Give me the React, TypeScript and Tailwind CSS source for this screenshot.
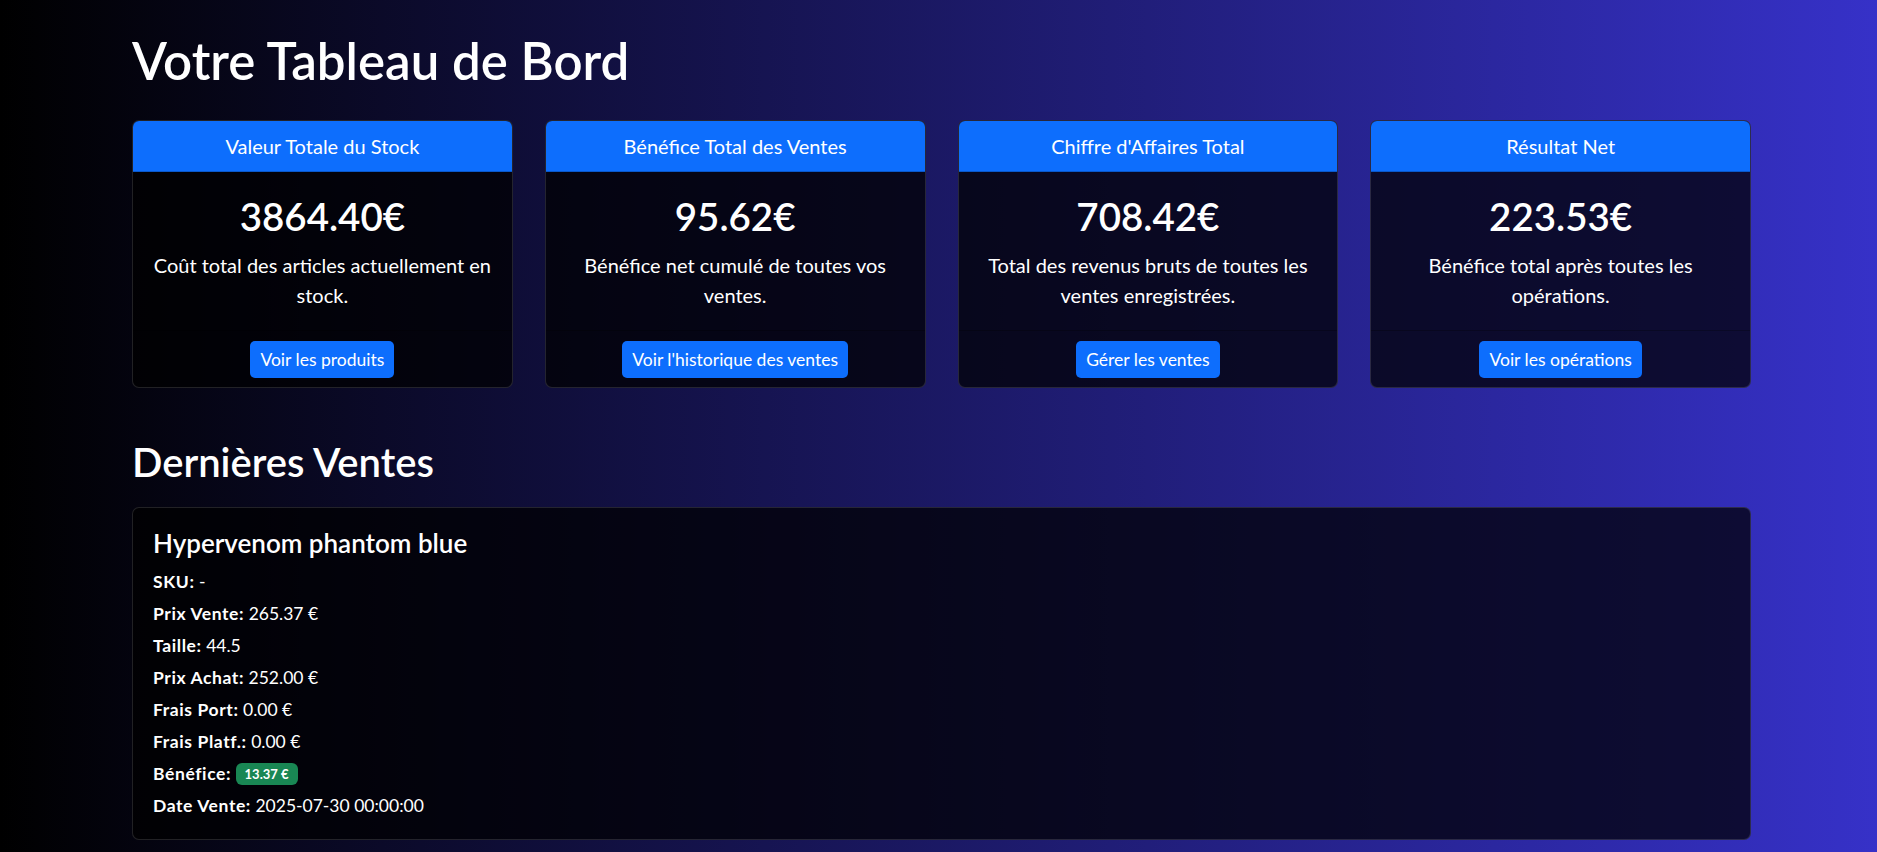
const stats = [
  {
    title: "Valeur Totale du Stock",
    value: "3864.40€",
    text: "Coût total des articles actuellement en stock.",
    action: "Voir les produits",
  },
  {
    title: "Bénéfice Total des Ventes",
    value: "95.62€",
    text: "Bénéfice net cumulé de toutes vos ventes.",
    action: "Voir l'historique des ventes",
  },
  {
    title: "Chiffre d'Affaires Total",
    value: "708.42€",
    text: "Total des revenus bruts de toutes les ventes enregistrées.",
    action: "Gérer les ventes",
  },
  {
    title: "Résultat Net",
    value: "223.53€",
    text: "Bénéfice total après toutes les opérations.",
    action: "Voir les opérations",
  },
];

const details = [
  ["SKU:", "-"],
  ["Prix Vente:", "265.37 €"],
  ["Taille:", "44.5"],
  ["Prix Achat:", "252.00 €"],
  ["Frais Port:", "0.00 €"],
  ["Frais Platf.:", "0.00 €"],
  ["Bénéfice:", null],
  ["Date Vente:", "2025-07-30 00:00:00"],
];

function StatCard({ title, value, text, action }: (typeof stats)[number]) {
  return (
    <div className="flex flex-col overflow-hidden rounded-[7px] border border-white/[0.13] bg-black/[0.72]">
      <div className="border-b border-black/20 bg-[#0d6efd] px-5 py-[10px] text-center text-[20px] leading-[30px] text-white">
        {title}
      </div>
      <div className="flex-1 px-5 pt-5 pb-5 text-center">
        <h2 className="mb-[10px] text-[38.5px] font-semibold leading-[48px] text-white">{value}</h2>
        <p className="text-[20px] leading-[30px] text-white">{text}</p>
      </div>
      <div className="flex justify-center border-t border-black/25 px-5 pt-[10px] pb-[9px]">
        <button className="h-[37px] rounded-[5px] bg-[#0d6efd] px-[10px] text-[17.5px] leading-[26px] text-white">
          {action}
        </button>
      </div>
    </div>
  );
}

export default function App() {
  return (
    <div
      className="min-h-screen bg-linear-to-r/srgb from-black to-[#3631c8] pb-[13px] text-white"
      style={{ fontFamily: "Lato, 'Noto Sans', sans-serif" }}
    >
      <div className="ml-[132px] w-[1619px]">
        <h1 className="pt-[31px] pb-[29px] text-[51px] font-semibold leading-[60px]">Votre Tableau de Bord</h1>

        <div className="grid grid-cols-4 gap-[32px]">
          {stats.map((s) => (
            <StatCard key={s.title} {...s} />
          ))}
        </div>

        <h2 className="mt-[50px] mb-[21px] text-[40px] font-semibold leading-[48px]">Dernières Ventes</h2>

        <div className="rounded-[7px] border border-white/[0.13] bg-black/[0.72] p-5">
          <h5 className="mb-[10px] text-[26px] font-semibold leading-[30px]">Hypervenom phantom blue</h5>
          {details.map(([label, val], i) => (
            <p key={label} className={`text-[17.5px] leading-[27px] ${i < details.length - 1 ? "mb-[5px]" : ""}`}>
              <strong className="font-bold tracking-[0.6px]">{label}</strong>{" "}
              {val ?? (
                <span className="inline-block rounded-[6px] bg-[#198754] px-[9px] py-[4px] align-[1px] text-[13px] font-bold leading-[14px] text-white">
                  13.37 €
                </span>
              )}
            </p>
          ))}
        </div>
      </div>
    </div>
  );
}
